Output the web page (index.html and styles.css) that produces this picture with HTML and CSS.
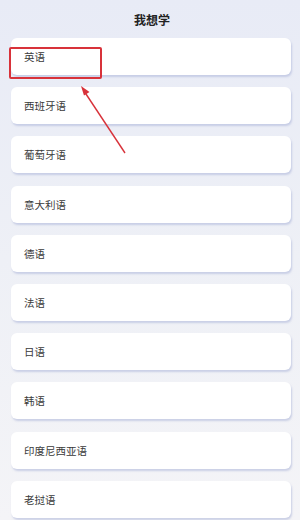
FILE: index.html
```html
<!DOCTYPE html>
<html lang="zh">
<head>
    <meta charset="UTF-8">
    <meta name="viewport" content="width=device-width, initial-scale=1.0">
    <title>我想学</title>
    <link rel="stylesheet" href="styles.css">
</head>
<body>
    <div class="pagina">
        <div class="titulo">我想学</div>
        <div class="lista">
            <div class="idioma">英语</div>
            <div class="idioma">西班牙语</div>
            <div class="idioma">葡萄牙语</div>
            <div class="idioma">意大利语</div>
            <div class="idioma">德语</div>
            <div class="idioma">法语</div>
            <div class="idioma">日语</div>
            <div class="idioma">韩语</div>
            <div class="idioma">印度尼西亚语</div>
            <div class="idioma">老挝语</div>
        </div>

        <!-- anotacion -->
        <div class="marca"></div>
        <svg class="flecha" width="300" height="200" viewBox="0 0 300 200">
            <line x1="125" y1="153" x2="84" y2="91" stroke="#d8323a" stroke-width="1.4"/>
            <polygon points="81,86 89.5,92 84,95.5" fill="#d8323a"/>
        </svg>
    </div>
</body>
</html>
```

FILE: styles.css
```css
* {
    margin: 0;
    padding: 0;
    box-sizing: border-box;
}

body {
    width: 300px;
    height: 520px;
    overflow: hidden;
    font-family: "Noto Sans CJK SC", "Noto Sans", sans-serif;
    background: linear-gradient(180deg, #e8ebf6 0%, #eef0f6 50%, #f4f4f7 100%);
    color: #333;
}

.pagina {
    position: relative;
    padding: 0 9px 0 11px;
}

.titulo {
    height: 38px;
    display: flex;
    justify-content: center;
    align-items: center;
    font-size: 12px;
    font-weight: bold;
    color: #222;
    padding-left: 2px;
}

.lista {
    display: flex;
    flex-direction: column;
    gap: 12.2px;
}

.idioma {
    height: 37px;
    display: flex;
    align-items: center;
    padding-left: 13px;
    font-size: 10.5px;
    color: #3a3a3a;
    background-color: #fff;
    border-radius: 6px;
    box-shadow: 1px 2px 2px rgba(170, 178, 215, 0.55);
}

.marca {
    position: absolute;
    left: 9px;
    top: 47px;
    width: 93px;
    height: 32px;
    border: 2px solid #d8323a;
    border-radius: 2px;
}

.flecha {
    position: absolute;
    left: 0;
    top: 0;
}
```
